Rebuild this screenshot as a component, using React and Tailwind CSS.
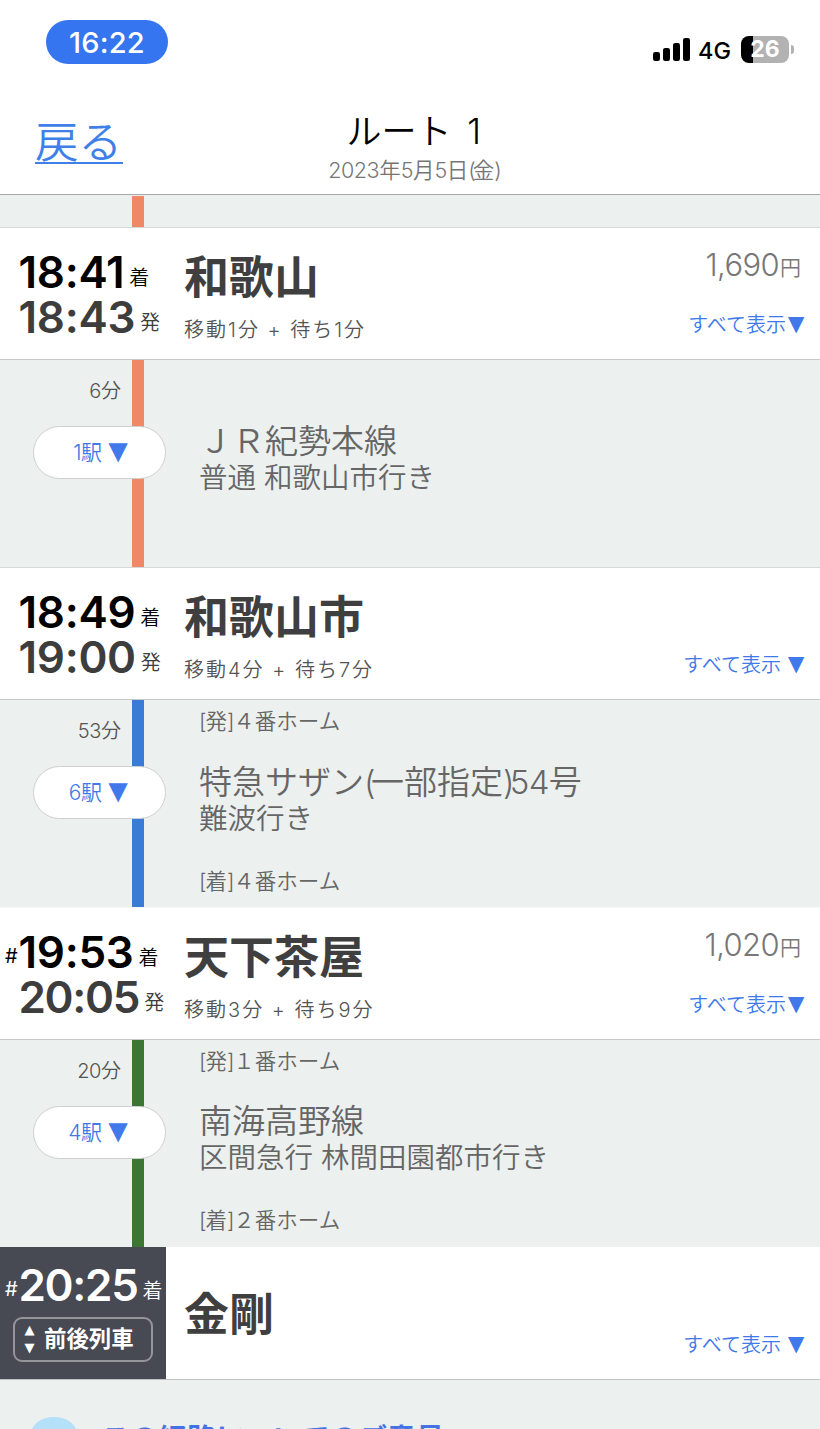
import React from "react";

const stops = [
  {
    name: "和歌山",
    arrive: "18:41",
    depart: "18:43",
    walk: 1,
    wait: 1,
    price: "1,690",
    ride: {
      minutes: 6,
      stations: 1,
      color: "bg-[#ee8866]",
      line: "ＪＲ紀勢本線",
      bound: "普通 和歌山市行き",
    },
  },
  {
    name: "和歌山市",
    arrive: "18:49",
    depart: "19:00",
    walk: 4,
    wait: 7,
    ride: {
      minutes: 53,
      stations: 6,
      color: "bg-[#3a7bd5]",
      line: "特急サザン(一部指定)54号",
      bound: "難波行き",
      from: "４番ホーム",
      to: "４番ホーム",
    },
  },
  {
    name: "天下茶屋",
    arrive: "19:53",
    depart: "20:05",
    walk: 3,
    wait: 9,
    price: "1,020",
    estimated: true,
    ride: {
      minutes: 20,
      stations: 4,
      color: "bg-[#3b7632]",
      line: "南海高野線",
      bound: "区間急行 林間田園都市行き",
      from: "１番ホーム",
      to: "２番ホーム",
    },
  },
];

// Latin digits and brackets get a lighter, narrower face than the kanji around them
function Mixed({ text }) {
  return String(text)
    .split(/([0-9,]+|[()]|[[\]])/)
    .filter(Boolean)
    .map((part, i) => {
      if (/^[0-9]/.test(part)) {
        return (
          <span key={i} className="font-['Inter',sans-serif] font-light tracking-[-0.02em]">
            {part}
          </span>
        );
      }
      if (/^[()]/.test(part)) {
        return (
          <span key={i} className="font-['Inter',sans-serif] font-light tracking-[-0.14em]">
            {part}
          </span>
        );
      }
      if (/^[[\]]/.test(part)) {
        return (
          <span key={i} className="font-['Inter',sans-serif] font-light tracking-[-0.05em]">
            {part}
          </span>
        );
      }
      return <span key={i}>{part}</span>;
    });
}

function StatusBar() {
  return (
    <div className="flex h-[84px] items-start justify-between pl-[46px] pr-[26px] pt-5 font-['Inter',sans-serif]">
      <div className="flex h-11 w-[122px] items-center justify-center rounded-full bg-[#3575f0] text-[29px] font-medium leading-none tracking-[0.2px] text-white">
        16:22
      </div>
      <div className="mt-4 flex h-[27px] items-center">
        <svg width="38" height="24" viewBox="0 0 38 24" className="-mt-px">
          <rect x="0" y="15" width="7" height="9" rx="2.2" />
          <rect x="10" y="11" width="7" height="13" rx="2.2" />
          <rect x="20" y="6" width="7" height="18" rx="2.2" />
          <rect x="30" y="1" width="7" height="23" rx="2.2" />
        </svg>
        <span className="ml-[7px] mt-[3px] w-[43px] text-[23.5px] font-medium leading-none text-black">4G</span>
        <div className="flex h-[27px] w-12 items-center justify-center rounded-[8px] bg-linear-to-r from-black from-25% to-[#b2b2b2] to-25% text-[23px] font-bold leading-none text-white">
          26
        </div>
        <span className="ml-0.5 h-[9px] w-[3px] rounded-r-full bg-[#b2b2b2]" />
      </div>
    </div>
  );
}

function Header() {
  return (
    <header className="grid h-[111px] grid-cols-[1fr_300px_1fr] border-b border-[#a5a8a8]">
      <a className="mt-7 ml-[35px] h-[52px] w-[88px] whitespace-nowrap border-b-2 border-[#3f7fe8] text-[43.5px] font-[350] leading-[62px] text-[#3f7fe8]">
        戻る
      </a>
      <div className="flex flex-col items-center pl-[7px] pt-[29px]">
        <h1 className="text-[35px] font-[350] leading-[36px] text-black [word-spacing:6px]">
          <Mixed text="ルート 1" />
        </h1>
        <p className="mt-2 text-[21.5px] font-[350] leading-[24px] text-[#757575]">
          <Mixed text="2023年5月5日(金)" />
        </p>
      </div>
    </header>
  );
}

function TimeLine({ time, label, estimated, className }) {
  const spacing = time.startsWith("20") ? "tracking-[-1.3px]" : "tracking-[-0.3px]";
  return (
    <div className={"flex h-[44.5px] items-center whitespace-nowrap " + className}>
      <span className="w-[13.5px] pt-2 font-['Inter',sans-serif] text-[20px] leading-none">
        {estimated ? "#" : ""}
      </span>
      <span className={"font-['Inter',sans-serif] text-[44px] font-semibold leading-[44px] " + spacing}>{time}</span>
      <span className="ml-[5px] pt-3 text-[20px] font-[350] leading-none">{label}</span>
    </div>
  );
}

function ShowAll({ tight }) {
  return (
    <button className="flex items-center text-[20px] font-[350] leading-6 text-[#4179ea]">
      <span>すべて表示</span>
      <span
        className={
          "flex h-6 w-[18px] justify-center font-['DejaVu_Sans',sans-serif] text-[28px] leading-[21px] " +
          (tight ? "ml-px" : "ml-[6px]")
        }
      >
        ▼
      </span>
    </button>
  );
}

function StopRow({ stop }) {
  return (
    <section
      className={
        "flex h-[133px] border-t border-b border-b-[#c6c9c9] bg-white " +
        (stop.estimated ? "border-t-[#f6f8f7]" : "border-t-[#d5d8d8]")
      }
    >
      <div className="w-[184px] pl-[5px] pt-[22px]">
        <TimeLine time={stop.arrive} label="着" estimated={stop.estimated} className="text-black" />
        <TimeLine time={stop.depart} label="発" className="text-[#3d3d3d]" />
      </div>
      <div className="flex-1 pt-7">
        <h2 className="text-[45px] font-bold leading-[46px] text-[#3f3f3f]">{stop.name}</h2>
        <p className="mt-4 font-['Inter','Noto_Sans_CJK_JP',sans-serif] text-[20px] font-[350] leading-6 tracking-[2px] text-[#555]">
          移動{stop.walk}分 + 待ち{stop.wait}分
        </p>
      </div>
      <div className="flex flex-col items-end pr-[15px] pt-[19px]">
        <div className="flex h-9 items-center pr-1 text-[#777]">
          {stop.price && (
            <>
              <span className="text-[31px] leading-9">
                <Mixed text={stop.price} />
              </span>
              <span className="ml-px pt-1.5 text-[21px] font-[350] leading-6">円</span>
            </>
          )}
        </div>
        <div className="mt-[30px]">
          <ShowAll tight={!!stop.price} />
        </div>
      </div>
    </section>
  );
}

function RideRow({ ride }) {
  return (
    <section className="flex h-[207px]">
      <div className="relative w-[199px]">
        <div className={"ml-[132px] h-full w-3 " + ride.color} />
        <span className="absolute right-[78px] top-[19px] text-[20px] font-[350] leading-6 text-[#555]">
          <Mixed text={ride.minutes + "分"} />
        </span>
        <button className="absolute left-[33px] top-[66px] flex h-[53px] w-[133px] items-center rounded-full border border-[#cfcfcf] bg-white pl-[32px] text-[21px] font-[350] leading-6 text-[#4179ea]">
          <span className="w-9 whitespace-nowrap text-right">
            <Mixed text={ride.stations + "駅"} />
          </span>
          <span className="ml-[6px] flex h-6 w-5 justify-center font-['DejaVu_Sans',sans-serif] text-[33px] leading-[19px]">
            ▼
          </span>
        </button>
      </div>
      <div className="flex flex-1 flex-col whitespace-nowrap font-[350] text-[#666]">
        <p className="mt-[9px] h-6 text-[21.5px] leading-6">{ride.from && <Mixed text={"[発]" + ride.from} />}</p>
        <p className="mt-[31px] text-[33px] leading-9">
          <Mixed text={ride.line} />
        </p>
        <p className="text-[28.5px] leading-9">{ride.bound}</p>
        <p className="mt-8 h-6 text-[21.5px] leading-6">{ride.to && <Mixed text={"[着]" + ride.to} />}</p>
      </div>
    </section>
  );
}

function Destination() {
  return (
    <section className="flex h-[133px] border-b border-[#c0c3c3] bg-white">
      <div className="w-[166px] bg-[#474953] pl-[5px] pt-4 text-white">
        <TimeLine time="20:25" label="着" estimated className="text-white" />
        <button className="ml-2 mt-[9px] flex h-[45px] w-[140px] items-center rounded-[9px] border-2 border-[#95969c] pl-2">
          <span className="flex w-[13px] flex-col items-center gap-1.5 font-['DejaVu_Sans',sans-serif] text-[13px] leading-3">
            <span>▲</span>
            <span>▼</span>
          </span>
          <span className="ml-2 pt-0.5 text-[22.4px] font-bold leading-6">前後列車</span>
        </button>
      </div>
      <h2 className="flex-1 pl-[18px] pt-[46px] text-[45px] font-bold leading-[46px] text-[#3f3f3f]">金剛</h2>
      <div className="pr-[15px] pt-[86px]">
        <ShowAll />
      </div>
    </section>
  );
}

export default function App() {
  return (
    <main className="h-[1429px] w-[820px] overflow-hidden bg-[#ecf0ef] font-['Liberation_Sans','Noto_Sans_CJK_JP',sans-serif]">
      <div className="bg-white">
        <StatusBar />
        <Header />
      </div>
      <div className="h-8">
        <div className="ml-[132px] h-full w-3 border-t border-[#ecf0ef] bg-[#ee8866]" />
      </div>
      {stops.map((stop) => (
        <React.Fragment key={stop.name}>
          <StopRow stop={stop} />
          <RideRow ride={stop.ride} />
        </React.Fragment>
      ))}
      <Destination />
      <footer className="flex h-[49px] items-start overflow-hidden pl-[31px]">
        <span className="mt-[37px] h-[34px] w-[46px] shrink-0 rounded-[50%] bg-[#b4e0f9]" />
        <p className="ml-6 mt-[41px] whitespace-nowrap text-[28.7px] font-bold leading-[36px] text-[#4472e3]">
          この経路についてのご意見
        </p>
      </footer>
    </main>
  );
}
